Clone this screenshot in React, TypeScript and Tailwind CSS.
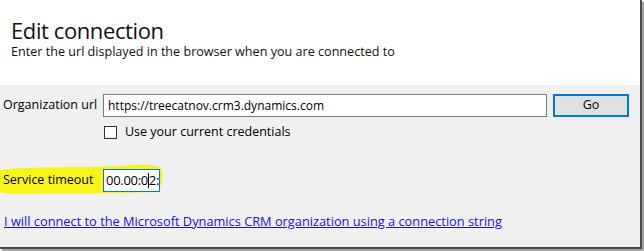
import React from 'react';

const font = { fontFamily: '"Open Sans", "Noto Sans", sans-serif' };

export default function App() {
  return (
    <div className="w-[644px] h-[251px] bg-white" style={font}>
      <div className="w-[642px] h-[249px] border-r-2 border-b-2 border-[#4a4a4a] shadow-[2px_2px_1px_rgba(0,0,0,0.35)] flex flex-col overflow-hidden">
        <div className="h-[85px] bg-white pl-[11px] pt-[16px]">
          <h1 className="text-[22px] leading-[28px] tracking-[-0.4px] text-[#111]">Edit connection</h1>
          <p className="text-[12.6px] leading-[16px] text-[#111]">Enter the url displayed in the browser when you are connected to</p>
        </div>
        <div className="flex-1 bg-[#f0f0f0] relative">
          <div className="flex items-center mt-[9px] pl-[3px]">
            <span className="text-[12.5px] text-black w-[100px]">Organization url</span>
            <div className="w-[444px] h-[23px] border border-[#7a7a7a] bg-white px-[4px] flex items-center text-[12px] text-black">
              https://treecatnov.crm3.dynamics.com
            </div>
            <button className="ml-[6px] w-[76px] h-[23px] bg-[#e1e1e1] border-2 border-[#0078d7] text-[12.5px] text-black">
              Go
            </button>
          </div>
          <label className="flex items-center gap-[8px] ml-[104px] mt-[6px] text-[12.5px] text-black">
            <span className="w-[13px] h-[13px] border border-[#333] bg-white" />
            Use your current credentials
          </label>
          <svg className="absolute left-0 top-[78px]" width="165" height="34" viewBox="0 0 165 34">
            <path d="M0 7 C30 3 80 5 120 3 C140 1 156 1 161 5 C164 13 162 24 157 29 C120 31 60 30 20 31 C8 31 2 30 0 29 Z" fill="#f5f51a" />
          </svg>
          <div className="relative flex items-center mt-[27px] pl-[3px]">
            <span className="text-[12.5px] text-black w-[100px]">Service timeout</span>
            <div className="w-[57px] h-[23px] border border-[#0078d7] bg-white pl-[2px] flex items-center text-[13px] text-black tracking-[-0.3px] whitespace-nowrap overflow-visible">
              00.00:0<span className="inline-block w-px h-[15px] bg-black" />2:
            </div>
          </div>
          <a href="#" className="block mt-[20px] ml-[4px] text-[12.8px] text-[#1a0dff] underline">
            I will connect to the Microsoft Dynamics CRM organization using a connection string
          </a>
        </div>
      </div>
    </div>
  );
}
